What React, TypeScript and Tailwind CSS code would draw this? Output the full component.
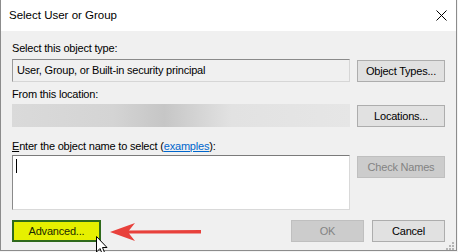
import React from "react";

const font = { fontFamily: '"Liberation Sans", Arial, sans-serif' };

function Btn({
  children,
  className = "",
}: {
  children: React.ReactNode;
  className?: string;
}) {
  return (
    <div
      className={`h-[22px] flex items-center justify-center border text-[11px] ${className}`}
    >
      {children}
    </div>
  );
}

export default function App() {
  return (
    <div
      className="w-[458px] h-[252px] bg-[#f4f4f4] relative overflow-hidden text-[#000] tracking-[-0.2px]"
      style={font}
    >
      <div className="w-[457px] h-[251px] border-l border-r border-b border-[#8c8c8c] flex flex-col">
        {/* title bar */}
        <div className="h-[31px] bg-white flex items-center justify-between pl-[8px] pr-[9px] shrink-0">
          <span className="text-[11.5px] text-[#000] tracking-normal">Select User or Group</span>
          <svg width="11" height="11" viewBox="0 0 11 11" className="mt-[-1px]">
            <path d="M0.5 0.5 L10.5 10.5 M10.5 0.5 L0.5 10.5" stroke="#000" strokeWidth="1" />
          </svg>
        </div>
        {/* body */}
        <div className="flex-1 bg-[#f0f0f0] pl-[11px] pr-[11px] flex flex-col text-[11px]">
          <div className="mt-[9px] h-[16px] leading-[16px]">Select this object type:</div>
          <div className="mt-[3px] flex items-start gap-[7px]">
            <div className="w-[338px] h-[23px] border border-t-[#8a8a8a] border-l-[#9a9a9a] border-r-[#d6d6d6] border-b-[#d6d6d6] bg-[#f0f0f0] flex items-center pl-[4px]">
              User, Group, or Built-in security principal
            </div>
            <Btn className="w-[88px] mt-[1px] bg-[#e1e1e1] border-[#adadad]">Object Types...</Btn>
          </div>
          <div className="mt-[4px] h-[16px] leading-[16px]">From this location:</div>
          <div className="mt-[2px] flex items-start gap-[7px]">
            <div className="w-[338px] h-[23px] bg-[linear-gradient(90deg,#dadada_0%,#d4d4d4_30%,#c6c6c6_45%,#e2e2e2_65%,#e6e6e6_100%)]" />
            <Btn className="w-[88px] mt-[1px] bg-[#e1e1e1] border-[#adadad]">Locations...</Btn>
          </div>
          <div className="mt-[11px] h-[16px] leading-[16px]">
            <span className="underline">E</span>nter the object name to select (
            <span className="text-[#0066cc] underline">examples</span>):
          </div>
          <div className="mt-[1px] flex items-start gap-[7px]">
            <div className="w-[338px] h-[55px] border border-t-[#7a7a7a] border-l-[#8a8a8a] border-r-[#d9d9d9] border-b-[#d9d9d9] bg-white relative">
              <div className="absolute left-[3px] top-[3px] w-[1px] h-[14px] bg-black" />
            </div>
            <Btn className="w-[88px] mt-[1px] bg-[#cccccc] border-[#bfbfbf] text-[#838383]">Check Names</Btn>
          </div>
          <div className="mt-[10px] flex items-center relative">
            <Btn className="w-[89px] bg-[#e6f000] border-2 border-[#2f6a1c] text-[#1a2a00]">Advanced...</Btn>
            <div className="flex-1" />
            <Btn className="w-[73px] bg-[#cccccc] border-[#bfbfbf] text-[#838383]">OK</Btn>
            <Btn className="w-[73px] ml-[8px] bg-[#e1e1e1] border-[#adadad]">Cancel</Btn>
          </div>
        </div>
      </div>

      {/* red arrow annotation */}
      <svg
        className="absolute left-[108px] top-[220px]"
        width="96"
        height="24"
        viewBox="0 0 96 24"
      >
        <path
          d="M2 12 L27 3 L21 10.5 L93 10 L93 13.5 L21 13.5 L27 21 Z"
          fill="#e8413c"
        />
      </svg>

      {/* mouse cursor */}
      <svg
        className="absolute left-[95px] top-[235px]"
        width="14"
        height="21"
        viewBox="0 0 14 21"
      >
        <path
          d="M1.5 1.5 L1.5 17 L5 13.5 L7.5 19.5 L10 18.5 L7.5 12.5 L12 12.5 Z"
          fill="#fff"
          stroke="#000"
          strokeWidth="1"
          strokeLinejoin="miter"
        />
      </svg>

      {/* resize grip */}
      <div className="absolute left-[452px] top-[242px] w-[2px] h-[2px] bg-[#b5b5b5]" />
      <div className="absolute left-[449px] top-[245px] w-[2px] h-[2px] bg-[#b5b5b5]" />
      <div className="absolute left-[452px] top-[245px] w-[2px] h-[2px] bg-[#b5b5b5]" />
      <div className="absolute left-[446px] top-[248px] w-[2px] h-[2px] bg-[#b5b5b5]" />
      <div className="absolute left-[449px] top-[248px] w-[2px] h-[2px] bg-[#b5b5b5]" />
      <div className="absolute left-[452px] top-[248px] w-[2px] h-[2px] bg-[#b5b5b5]" />
    </div>
  );
}
